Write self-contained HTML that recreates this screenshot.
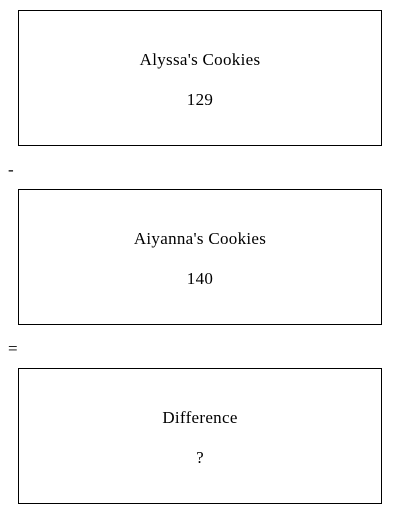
<!DOCTYPE html>
<html><head><style>
html,body{margin:0;padding:0;background:#fff;width:400px;height:514px;overflow:hidden;font-family:"Liberation Serif",serif;font-size:17px;color:#000}
.box{position:absolute;left:18px;width:362px;height:134px;border:1px solid #000}
.t{position:absolute;left:0;right:0;text-align:center;line-height:20px;letter-spacing:0.3px}
.op{position:absolute;left:8px;line-height:16px}
</style></head><body>
<div class="box" style="top:10px"><div class="t" style="top:39px">Alyssa's Cookies</div><div class="t" style="top:79px">129</div></div>
<div class="op" style="top:162px">-</div>
<div class="box" style="top:189px"><div class="t" style="top:39px">Aiyanna's Cookies</div><div class="t" style="top:79px">140</div></div>
<div class="op" style="top:341px">=</div>
<div class="box" style="top:368px"><div class="t" style="top:39px">Difference</div><div class="t" style="top:79px">?</div></div>
</body></html>
